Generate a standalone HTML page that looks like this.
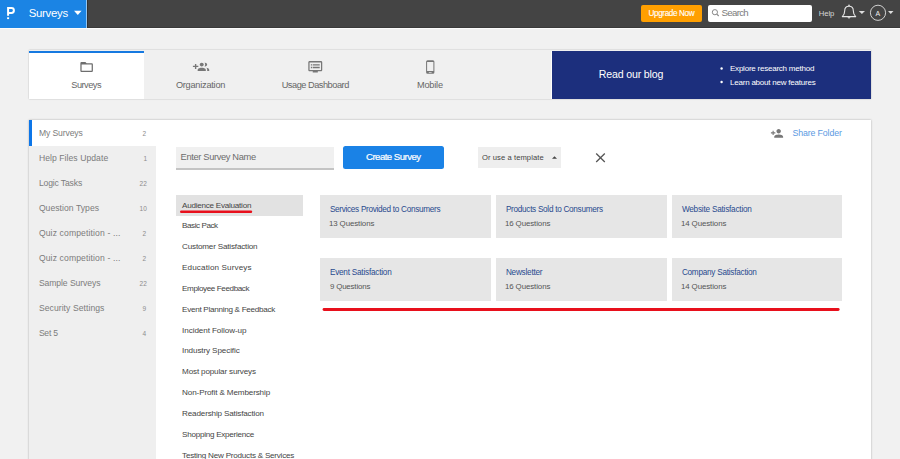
<!DOCTYPE html>
<html>
<head>
<meta charset="utf-8">
<style>
html,body{margin:0;padding:0;}
body{width:900px;height:459px;overflow:hidden;background:#f1f1f1;position:relative;font-family:"Liberation Sans", sans-serif;}
.a{position:absolute;box-sizing:border-box;}
.t{position:absolute;white-space:nowrap;font-family:"Liberation Sans", sans-serif;}
svg{position:absolute;overflow:visible;}
</style>
</head>
<body>
<!-- top bar -->
<div class="a" style="left:0;top:0;width:900px;height:28.3px;background:#444444;"></div>
<div class="a" style="left:0;top:27.2px;width:900px;height:1.1px;background:#3a3a3a;"></div>
<div class="a" style="left:0;top:0;width:86px;height:28px;background:#1b84e4;"></div>
<div class="a" style="left:86px;top:0;width:1.1px;height:28px;background:#90c6f6;"></div>
<div class="a" style="left:87.1px;top:0;width:0.9px;height:28px;background:#333;"></div>
<div class="a" style="left:0;top:28.3px;width:900px;height:1.2px;background:#fcfcfc;"></div>
<svg style="left:0;top:0" width="100" height="28">
  <path d="M8.1 15.8 V8.1 H11.45 A2.45 2.45 0 0 1 11.45 13 H8.1" fill="none" stroke="#fff" stroke-width="2"/>
  <rect x="7.1" y="17.3" width="2" height="1.8" fill="#fff"/>
  <path d="M74 10.8 H81.6 L77.8 15 Z" fill="#fff"/>
</svg>
<div class="a" style="left:641.2px;top:4.5px;width:60.6px;height:17.7px;background:#ff9f00;border-radius:2px;"></div>
<div class="a" style="left:708px;top:4.7px;width:104.3px;height:17.3px;background:#fff;border-radius:2px;"></div>
<svg style="left:0;top:0" width="900" height="28">
  <circle cx="714.9" cy="12.2" r="2.6" fill="none" stroke="#888" stroke-width="1"/>
  <path d="M716.8 14.1 L718.7 16" stroke="#888" stroke-width="1.1"/>
  <!-- bell -->
  <path d="M842.3 16.6 Q844.7 14.6 844.7 10.8 Q844.7 6.3 849 6.3 Q853.3 6.3 853.3 10.8 Q853.3 14.6 855.7 16.6 Z" fill="none" stroke="#e6e6e6" stroke-width="1.1" stroke-linejoin="round"/>
  <circle cx="849" cy="5.4" r="0.8" fill="#e6e6e6"/>
  <path d="M847.4 17.3 Q849 19.8 850.6 17.3 Z" fill="#e6e6e6"/>
  <path d="M858.8 11 H865 L861.9 14 Z" fill="#ddd"/>
  <circle cx="878" cy="12.8" r="7.6" fill="none" stroke="#e0e0e0" stroke-width="0.9"/>
  <path d="M888 11 H893.5 L890.75 14 Z" fill="#ddd"/>
</svg>

<!-- tabs card -->
<div class="a" style="left:28.6px;top:50.4px;width:842.6px;height:48.8px;background:#f0f0f0;box-shadow:0 0 1.5px rgba(0,0,0,0.25);"></div>
<div class="a" style="left:29px;top:51px;width:114.7px;height:47.5px;background:#fff;"></div>
<div class="a" style="left:29px;top:51px;width:114.7px;height:1.6px;background:#1679e0;"></div>
<div class="a" style="left:551px;top:51px;width:1px;height:47.7px;background:#fdfdfd;"></div>
<div class="a" style="left:552px;top:51px;width:318.6px;height:47.7px;background:#1c2f7d;"></div>
<svg style="left:0;top:0" width="900" height="100">
  <!-- folder -->
  <path transform="translate(79.1 59.4) scale(0.6275)" fill="#6e6e6e" d="M20 6h-8l-2-2H4c-1.1 0-1.99.9-1.99 2L2 18c0 1.1.9 2 2 2h16c1.1 0 2-.9 2-2V8c0-1.1-.9-2-2-2zm0 12H4V8h16v10z"/>
  <!-- org -->
  <path transform="translate(192.9 59.55) scale(0.68 0.63)" fill="#777" d="M8 10H5V7H3v3H0v2h3v3h2v-3h3v-2zm10 1c1.66 0 2.99-1.34 2.99-3S19.66 5 18 5c-.32 0-.63.05-.91.14.57.81.9 1.79.9 2.86s-.34 2.04-.9 2.86c.28.09.59.14.91.14zm-5 0c1.66 0 2.99-1.34 2.99-3S14.66 5 13 5c-1.66 0-3 1.34-3 3s1.34 3 3 3zm6.62 2.16c.83.73 1.38 1.66 1.38 2.84v2h3v-2c0-1.54-2.37-2.49-4.38-2.84zM13 13c-2 0-6 1-6 3v2h12v-2c0-2-4-3-6-3z"/>
  <!-- dashboard -->
  <path transform="translate(307.67 59.18) scale(0.634 0.64)" fill="#777" d="M21 3H3c-1.1 0-2 .9-2 2v12c0 1.1.9 2 2 2h5v2h8v-2h5c1.1 0 1.99-.9 1.99-2L23 5c0-1.1-.9-2-2-2zm0 14H3V5h18v12zm-2-9H8v2h11V8zm0 4H8v2h11v-2zM7 8H5v2h2V8zm0 4H5v2h2v-2z"/>
  <!-- mobile -->
  <path fill="#757575" fill-rule="evenodd" d="M427.6 60.3 H432.9 Q434.4 60.3 434.4 61.8 V72.3 Q434.4 73.8 432.9 73.8 H427.6 Q426.1 73.8 426.1 72.3 V61.8 Q426.1 60.3 427.6 60.3 Z M427.1 62 V71.1 H433.4 V62 Z"/>
  <rect x="428.8" y="72" width="2.8" height="0.8" fill="#ddd"/>
  <!-- bullets -->
  <circle cx="721.6" cy="68.5" r="1.2" fill="#fff"/>
  <circle cx="721.6" cy="82" r="1.2" fill="#fff"/>
</svg>

<!-- main card -->
<div class="a" style="left:28.6px;top:120.3px;width:842.6px;height:345px;background:#fff;box-shadow:0 0 2px rgba(0,0,0,0.3);"></div>
<div class="a" style="left:29px;top:145.7px;width:127px;height:320px;background:#efefef;"></div>
<div class="a" style="left:29px;top:120.3px;width:2.9px;height:25.3px;background:#0d76e8;"></div>

<!-- input & buttons -->
<div class="a" style="left:175.8px;top:146.7px;width:158.4px;height:23px;background:#f0f0f0;border-bottom:2px solid #c4c4c4;"></div>
<div class="a" style="left:342.9px;top:146px;width:101.1px;height:22.7px;background:#1a82e6;border-radius:2.5px;"></div>
<div class="a" style="left:477.5px;top:147px;width:83.8px;height:20.5px;background:#eeeeee;"></div>
<svg style="left:0;top:0" width="900" height="459">
  <path d="M552 158.8 H557 L554.5 156.2 Z" fill="#444"/>
  <path d="M596.2 153.5 L604.8 162 M604.8 153.5 L596.2 162" stroke="#555" stroke-width="1.3"/>
  <!-- share icon -->
  <path transform="translate(770.35 126.94) scale(0.555 0.54)" fill="#777" d="M15 12c2.21 0 4-1.790 4-4s-1.79-4-4-4-4 1.79-4 4 1.79 4 4 4zm-9-2V7H4v3H1v2h3v3h2v-3h3v-2H6zm9 4c-2.67 0-8 1.34-8 4v2h16v-2c0-2.660-5.33-4-8-4z"/>
</svg>

<!-- list highlight -->
<div class="a" style="left:175.9px;top:195px;width:127.1px;height:20.7px;background:#e2e2e2;"></div>

<!-- cards -->
<div class="a" style="left:320.1px;top:195px;width:170.7px;height:43px;background:#e6e6e6;"></div>
<div class="a" style="left:496.1px;top:195px;width:170.7px;height:43px;background:#e6e6e6;"></div>
<div class="a" style="left:672.1px;top:195px;width:170.1px;height:43px;background:#e6e6e6;"></div>
<div class="a" style="left:320.1px;top:257.6px;width:170.7px;height:43px;background:#e6e6e6;"></div>
<div class="a" style="left:496.1px;top:257.6px;width:170.7px;height:43px;background:#e6e6e6;"></div>
<div class="a" style="left:672.1px;top:257.6px;width:170.1px;height:43px;background:#e6e6e6;"></div>

<svg style="left:0;top:0" width="900" height="459">
  <!-- red lines -->
  <path d="M181.2 211.7 H251" stroke="#e8101c" stroke-width="2.4" stroke-linecap="round"/>
  <path d="M324 309.5 H838.2" stroke="#e8101c" stroke-width="2.8" stroke-linecap="round"/>
</svg>
<div class="t" style="left:28.70px;top:8px;font-size:11.4px;line-height:11.4px;letter-spacing:-0.283px;color:#fff;font-weight:normal;">Surveys</div>
<div class="t" style="left:648.50px;top:10px;font-size:8.2px;line-height:8.2px;letter-spacing:-0.400px;color:#fff;font-weight:normal;-webkit-text-stroke:0.12px #fff;">Upgrade Now</div>
<div class="t" style="left:875.60px;top:10px;font-size:7.0px;line-height:7.0px;letter-spacing:0.000px;color:#eee;font-weight:normal;">A</div>
<div class="t" style="left:721.60px;top:8px;font-size:9.7px;line-height:9.7px;letter-spacing:-0.720px;color:#7c7c7c;font-weight:normal;">Search</div>
<div class="t" style="left:818.80px;top:10px;font-size:7.7px;line-height:7.7px;letter-spacing:-0.100px;color:#d8d8d8;font-weight:normal;">Help</div>
<div class="t" style="left:71.30px;top:81px;font-size:9.2px;line-height:9.2px;letter-spacing:-0.500px;color:#666;font-weight:normal;">Surveys</div>
<div class="t" style="left:175.90px;top:81px;font-size:9.2px;line-height:9.2px;letter-spacing:-0.236px;color:#666;font-weight:normal;">Organization</div>
<div class="t" style="left:281.70px;top:81px;font-size:9.2px;line-height:9.2px;letter-spacing:-0.464px;color:#666;font-weight:normal;">Usage Dashboard</div>
<div class="t" style="left:417.00px;top:81px;font-size:9.2px;line-height:9.2px;letter-spacing:-0.200px;color:#666;font-weight:normal;">Mobile</div>
<div class="t" style="left:598.80px;top:69px;font-size:10.6px;line-height:10.6px;letter-spacing:-0.167px;color:#fff;font-weight:normal;">Read our blog</div>
<div class="t" style="left:730.00px;top:65px;font-size:8.0px;line-height:8.0px;letter-spacing:-0.227px;color:#fff;font-weight:normal;">Explore research method</div>
<div class="t" style="left:730.00px;top:79px;font-size:8.0px;line-height:8.0px;letter-spacing:-0.217px;color:#fff;font-weight:normal;">Learn about new features</div>
<div class="t" style="left:38.90px;top:129px;font-size:8.6px;line-height:8.6px;letter-spacing:-0.111px;color:#7c7c7c;font-weight:normal;">My Surveys</div>
<div class="t" style="left:142.60px;top:131px;font-size:6.5px;line-height:6.5px;letter-spacing:0.000px;color:#8c8c8c;font-weight:normal;">2</div>
<div class="t" style="left:38.90px;top:154px;font-size:8.6px;line-height:8.6px;letter-spacing:0.062px;color:#7c7c7c;font-weight:normal;">Help Files Update</div>
<div class="t" style="left:143.60px;top:156px;font-size:6.5px;line-height:6.5px;letter-spacing:0.000px;color:#8c8c8c;font-weight:normal;">1</div>
<div class="t" style="left:38.90px;top:179px;font-size:8.6px;line-height:8.6px;letter-spacing:-0.140px;color:#7c7c7c;font-weight:normal;">Logic Tasks</div>
<div class="t" style="left:139.60px;top:181px;font-size:6.5px;line-height:6.5px;letter-spacing:0.000px;color:#8c8c8c;font-weight:normal;">22</div>
<div class="t" style="left:38.90px;top:204px;font-size:8.6px;line-height:8.6px;letter-spacing:0.046px;color:#7c7c7c;font-weight:normal;">Question Types</div>
<div class="t" style="left:139.60px;top:206px;font-size:6.5px;line-height:6.5px;letter-spacing:0.000px;color:#8c8c8c;font-weight:normal;">10</div>
<div class="t" style="left:38.90px;top:229px;font-size:8.6px;line-height:8.6px;letter-spacing:0.124px;color:#7c7c7c;font-weight:normal;">Quiz competition - ...</div>
<div class="t" style="left:142.60px;top:231px;font-size:6.5px;line-height:6.5px;letter-spacing:0.000px;color:#8c8c8c;font-weight:normal;">2</div>
<div class="t" style="left:38.90px;top:254px;font-size:8.6px;line-height:8.6px;letter-spacing:0.124px;color:#7c7c7c;font-weight:normal;">Quiz competition - ...</div>
<div class="t" style="left:142.60px;top:256px;font-size:6.5px;line-height:6.5px;letter-spacing:0.000px;color:#8c8c8c;font-weight:normal;">2</div>
<div class="t" style="left:38.90px;top:279px;font-size:8.6px;line-height:8.6px;letter-spacing:-0.077px;color:#7c7c7c;font-weight:normal;">Sample Surveys</div>
<div class="t" style="left:139.60px;top:281px;font-size:6.5px;line-height:6.5px;letter-spacing:0.000px;color:#8c8c8c;font-weight:normal;">22</div>
<div class="t" style="left:38.90px;top:304px;font-size:8.6px;line-height:8.6px;letter-spacing:0.062px;color:#7c7c7c;font-weight:normal;">Security Settings</div>
<div class="t" style="left:142.60px;top:306px;font-size:6.5px;line-height:6.5px;letter-spacing:0.000px;color:#8c8c8c;font-weight:normal;">9</div>
<div class="t" style="left:38.90px;top:329px;font-size:8.6px;line-height:8.6px;letter-spacing:-0.250px;color:#7c7c7c;font-weight:normal;">Set 5</div>
<div class="t" style="left:142.60px;top:331px;font-size:6.5px;line-height:6.5px;letter-spacing:0.000px;color:#8c8c8c;font-weight:normal;">4</div>
<div class="t" style="left:180.60px;top:153px;font-size:9.3px;line-height:9.3px;letter-spacing:-0.350px;color:#6c6c6c;font-weight:normal;">Enter Survey Name</div>
<div class="t" style="left:366.00px;top:152px;font-size:9.6px;line-height:9.6px;letter-spacing:-0.525px;color:#fff;font-weight:normal;-webkit-text-stroke:0.2px #fff;">Create Survey</div>
<div class="t" style="left:482.00px;top:154px;font-size:7.6px;line-height:7.6px;letter-spacing:0.081px;color:#444;font-weight:normal;">Or use a template</div>
<div class="t" style="left:792.40px;top:129px;font-size:8.8px;line-height:8.8px;letter-spacing:-0.127px;color:#5b9ae2;font-weight:normal;">Share Folder</div>
<div class="t" style="left:182.10px;top:202px;font-size:8.1px;line-height:8.1px;letter-spacing:-0.250px;color:#444;font-weight:normal;">Audience Evaluation</div>
<div class="t" style="left:182.10px;top:222px;font-size:8.1px;line-height:8.1px;letter-spacing:-0.444px;color:#444;font-weight:normal;">Basic Pack</div>
<div class="t" style="left:182.10px;top:243px;font-size:8.1px;line-height:8.1px;letter-spacing:-0.185px;color:#444;font-weight:normal;">Customer Satisfaction</div>
<div class="t" style="left:182.10px;top:264px;font-size:8.1px;line-height:8.1px;letter-spacing:0.125px;color:#444;font-weight:normal;">Education Surveys</div>
<div class="t" style="left:182.10px;top:285px;font-size:8.1px;line-height:8.1px;letter-spacing:-0.394px;color:#444;font-weight:normal;">Employee Feedback</div>
<div class="t" style="left:182.10px;top:306px;font-size:8.1px;line-height:8.1px;letter-spacing:-0.279px;color:#444;font-weight:normal;">Event Planning &amp; Feedback</div>
<div class="t" style="left:182.10px;top:327px;font-size:8.1px;line-height:8.1px;letter-spacing:-0.076px;color:#444;font-weight:normal;">Incident Follow-up</div>
<div class="t" style="left:182.10px;top:347px;font-size:8.1px;line-height:8.1px;letter-spacing:-0.112px;color:#444;font-weight:normal;">Industry Specific</div>
<div class="t" style="left:182.10px;top:368px;font-size:8.1px;line-height:8.1px;letter-spacing:-0.158px;color:#444;font-weight:normal;">Most popular surveys</div>
<div class="t" style="left:182.10px;top:389px;font-size:8.1px;line-height:8.1px;letter-spacing:-0.127px;color:#444;font-weight:normal;">Non-Profit &amp; Membership</div>
<div class="t" style="left:182.10px;top:410px;font-size:8.1px;line-height:8.1px;letter-spacing:-0.159px;color:#444;font-weight:normal;">Readership Satisfaction</div>
<div class="t" style="left:182.10px;top:431px;font-size:8.1px;line-height:8.1px;letter-spacing:-0.267px;color:#444;font-weight:normal;">Shopping Experience</div>
<div class="t" style="left:182.10px;top:452px;font-size:8.1px;line-height:8.1px;letter-spacing:-0.233px;color:#444;font-weight:normal;">Testing New Products &amp; Services</div>
<div class="t" style="left:329.90px;top:206px;font-size:8.2px;line-height:8.2px;letter-spacing:-0.297px;color:#284a8e;font-weight:normal;">Services Provided to Consumers</div>
<div class="t" style="left:328.90px;top:220px;font-size:7.9px;line-height:7.9px;letter-spacing:-0.091px;color:#555;font-weight:normal;">13 Questions</div>
<div class="t" style="left:505.90px;top:206px;font-size:8.2px;line-height:8.2px;letter-spacing:-0.284px;color:#284a8e;font-weight:normal;">Products Sold to Consumers</div>
<div class="t" style="left:504.90px;top:220px;font-size:7.9px;line-height:7.9px;letter-spacing:-0.091px;color:#555;font-weight:normal;">16 Questions</div>
<div class="t" style="left:681.90px;top:206px;font-size:8.2px;line-height:8.2px;letter-spacing:-0.211px;color:#284a8e;font-weight:normal;">Website Satisfaction</div>
<div class="t" style="left:680.90px;top:220px;font-size:7.9px;line-height:7.9px;letter-spacing:-0.091px;color:#555;font-weight:normal;">14 Questions</div>
<div class="t" style="left:329.90px;top:269px;font-size:8.2px;line-height:8.2px;letter-spacing:-0.218px;color:#284a8e;font-weight:normal;">Event Satisfaction</div>
<div class="t" style="left:329.90px;top:283px;font-size:7.9px;line-height:7.9px;letter-spacing:-0.160px;color:#555;font-weight:normal;">9 Questions</div>
<div class="t" style="left:505.90px;top:269px;font-size:8.2px;line-height:8.2px;letter-spacing:-0.222px;color:#284a8e;font-weight:normal;">Newsletter</div>
<div class="t" style="left:504.90px;top:283px;font-size:7.9px;line-height:7.9px;letter-spacing:-0.091px;color:#555;font-weight:normal;">16 Questions</div>
<div class="t" style="left:681.90px;top:269px;font-size:8.2px;line-height:8.2px;letter-spacing:-0.247px;color:#284a8e;font-weight:normal;">Company Satisfaction</div>
<div class="t" style="left:680.90px;top:283px;font-size:7.9px;line-height:7.9px;letter-spacing:-0.091px;color:#555;font-weight:normal;">14 Questions</div>
</body>
</html>
